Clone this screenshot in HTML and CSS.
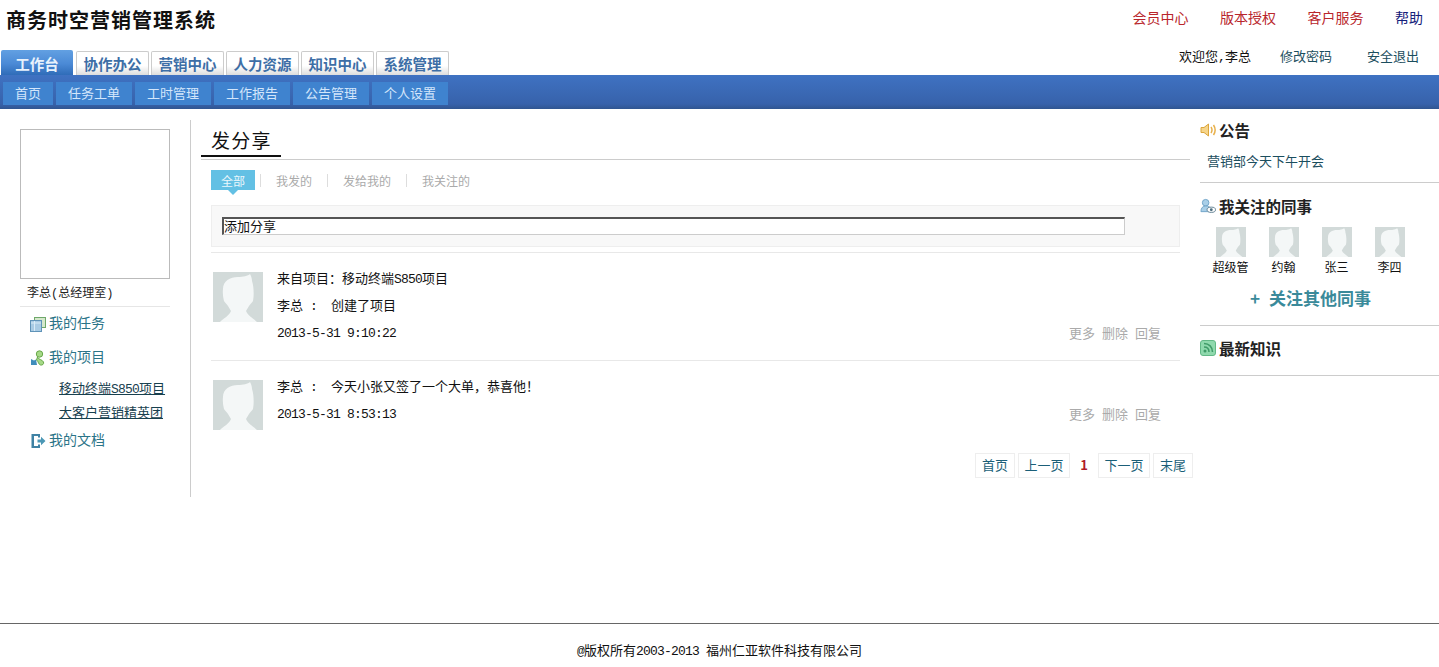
FILE: index.html
```html
<!DOCTYPE html>
<html lang="zh-CN">
<head>
<meta charset="utf-8">
<title>商务时空营销管理系统</title>
<link rel="stylesheet" href="styles.css">
</head>
<body>
<svg class="defs" width="0" height="0" aria-hidden="true">
  <symbol id="avatar" viewBox="0 0 50 50">
    <rect width="50" height="50" fill="#d2dad9"/>
    <path d="M10 17C10 9 17 5 25 5C30 5 35 4 37 2C38 4 39 6 39 9C41 15 41 24 40 29C39 31 37 32 36 34C35 36 34 37 33 39C35 44 40 46 44 50H7C11 46 16 44 18 39C17 37 16 36 15 34C14 32 12 31 11 29C10 25 9.500 21 10 17Z" fill="#f4f7f7"/>
  </symbol>
</svg>
<header class="header">
  <div class="brand">
    <h1 class="title">商务时空营销管理系统</h1>
    <nav class="tabs">
      <a class="tab tab-active">工作台</a>
      <a class="tab">协作办公</a>
      <a class="tab">营销中心</a>
      <a class="tab">人力资源</a>
      <a class="tab">知识中心</a>
      <a class="tab">系统管理</a>
    </nav>
  </div>
  <div class="account">
    <div class="links">
      <a class="link-red">会员中心</a>
      <a class="link-red">版本授权</a>
      <a class="link-red">客户服务</a>
      <a class="link-navy">帮助</a>
    </div>
    <div class="user">
      <span class="welcome">欢迎您<span class="num">,</span>李总</span>
      <a class="user-link">修改密码</a>
      <a class="user-link user-exit">安全退出</a>
    </div>
  </div>
</header>
<nav class="subnav">
  <a class="subnav-item subnav-first">首页</a>
  <a class="subnav-item">任务工单</a>
  <a class="subnav-item">工时管理</a>
  <a class="subnav-item">工作报告</a>
  <a class="subnav-item">公告管理</a>
  <a class="subnav-item">个人设置</a>
</nav>
<main class="main">
  <aside class="left">
    <div class="photo"></div>
    <div class="person">李总(总经理室)</div>
    <ul class="menu">
      <li class="menu-row">
        <svg class="icon" viewBox="0 0 16 16"><rect x="4.500" y="1.500" width="11" height="10" fill="#d5e8cc" stroke="#6fa86a"/><rect x=".5" y="4.500" width="11" height="11" fill="#a9cbe4" stroke="#5f93b8"/><path d="M1 7h10M4.500 5v10" stroke="#d8ebf7"/></svg>
        我的任务
      </li>
      <li class="menu-row">
        <svg class="icon" viewBox="0 0 16 16"><circle cx="9.500" cy="4" r="3.200" fill="#a6d987" stroke="#68a84a"/><path d="M7.500 7c.5 2.500 5 2.500 6 5 .8 2-1.200 3.500-3 3-2-.5-2-3.500-4-5Z" fill="#a6d987" stroke="#68a84a"/><path d="M1 9l3 1.500L6 9.500l1 5.500H1Z" fill="#3f8dbb"/></svg>
        我的项目
      </li>
      <li class="menu-sub"><a>移动终端<span class="num">S850</span>项目</a></li>
      <li class="menu-sub"><a>大客户营销精英团</a></li>
      <li class="menu-row">
        <svg class="icon" viewBox="0 0 16 16"><path d="M1.500 1H10v3.500H8V3H4v10h4v-1.500h2V15H1.500Z" fill="#3f82a4"/><path d="M7.500 6.500H11V3.800L15.500 8 11 12.200V9.500H7.500Z" fill="#4b97b5"/></svg>
        我的文档
      </li>
    </ul>
  </aside>
  <section class="center">
    <div class="page-head"><h2 class="page-title">发分享</h2></div>
    <div class="filters">
      <a class="filter-active">全部</a>
      <a class="filter filter-first">我发的</a>
      <a class="filter">发给我的</a>
      <a class="filter">我关注的</a>
    </div>
    <div class="composer"><input class="composer-input" type="text" value="添加分享"></div>
    <div class="feed">
      <article class="post post-first">
        <svg class="post-avatar"><use href="#avatar"/></svg>
        <div class="post-body">
          <p class="post-row">来自项目：移动终端<span class="num">S850</span>项目</p>
          <p class="post-row">李总<span class="num sep"> :  </span>创建了项目</p>
          <div class="post-row post-foot">
            <span class="num post-time">2013-5-31 9:10:22</span>
            <div class="actions"><a>更多</a><a>删除</a><a>回复</a></div>
          </div>
        </div>
      </article>
      <article class="post">
        <svg class="post-avatar"><use href="#avatar"/></svg>
        <div class="post-body">
          <p class="post-row">李总<span class="num sep"> :  </span>今天小张又签了一个大单，恭喜他！</p>
          <div class="post-row post-foot">
            <span class="num post-time">2013-5-31 8:53:13</span>
            <div class="actions"><a>更多</a><a>删除</a><a>回复</a></div>
          </div>
        </div>
      </article>
    </div>
    <div class="pager">
      <a class="page page-2">首页</a>
      <a class="page page-3">上一页</a>
      <span class="page-current">1</span>
      <a class="page page-3">下一页</a>
      <a class="page page-2">末尾</a>
    </div>
  </section>
  <aside class="right">
    <section class="panel panel-notice">
      <h3 class="panel-title">
        <svg class="icon" viewBox="0 0 16 16"><path d="M1 5.500h3L8.500 2v12L4 10.500H1Z" fill="#f6d58a" stroke="#dca63c"/><path d="M11 5c1.200 1.800 1.200 4.200 0 6M13.500 3c2 3 2 7 0 10" fill="none" stroke="#e8b14c" stroke-width="1.500"/></svg>
        公告
      </h3>
      <a class="notice">营销部今天下午开会</a>
    </section>
    <section class="panel panel-follow">
      <h3 class="panel-title">
        <svg class="icon" viewBox="0 0 17 16"><circle cx="6" cy="4.500" r="3.500" fill="#a9cfe8" stroke="#6fa3c8"/><path d="M1 14c0-4 2-6 5-6s4 1 5 2v4Z" fill="#a9cfe8" stroke="#6fa3c8"/><ellipse cx="12" cy="12" rx="4.500" ry="2.800" fill="#fff" stroke="#5f7f90"/><circle cx="12" cy="12" r="1.500" fill="#4f6f80"/></svg>
        我关注的同事
      </h3>
      <div class="people">
        <div class="colleague"><svg class="colleague-avatar"><use href="#avatar"/></svg><span>超级管</span></div>
        <div class="colleague"><svg class="colleague-avatar"><use href="#avatar"/></svg><span>约翰</span></div>
        <div class="colleague"><svg class="colleague-avatar"><use href="#avatar"/></svg><span>张三</span></div>
        <div class="colleague"><svg class="colleague-avatar"><use href="#avatar"/></svg><span>李四</span></div>
      </div>
      <a class="follow-more"><span class="plus">+</span>关注其他同事</a>
    </section>
    <section class="panel panel-news">
      <h3 class="panel-title">
        <svg class="icon" viewBox="0 0 16 16"><rect x=".5" y=".5" width="15" height="15" rx="2.500" fill="#8fd9ad" stroke="#62b886"/><circle cx="5" cy="11" r="1.500" fill="#3f9a68"/><path d="M4 7c3 0 5 2 5 5M4 3.500c5 0 8.500 3.500 8.500 8.500" fill="none" stroke="#3f9a68" stroke-width="1.500"/></svg>
        最新知识
      </h3>
    </section>
  </aside>
</main>
<footer class="footer"><span class="num">@</span>版权所有<span class="num">2003-2013 </span>福州仁亚软件科技有限公司</footer>
</body>
</html>
```
FILE: styles.css
```css
* { box-sizing: border-box; }
html, body { margin: 0; padding: 0; }
body {
  min-height: 667px;
  display: flex;
  flex-direction: column;
  background: #fff;
  color: #111;
  font: 13px/1.4 "Noto Sans CJK SC", "Liberation Sans", sans-serif;
}
a { color: inherit; text-decoration: none; }
h1, h2, h3, p, ul { margin: 0; padding: 0; }
ul { list-style: none; }
.defs { position: absolute; }
.num { font-family: "Liberation Mono", "Noto Sans CJK SC", monospace; font-size: 13px; letter-spacing: -0.8px; }
.sep { white-space: pre; }

.header { height: 75px; display: flex; justify-content: space-between; }
.title { height: 50px; padding: 0 0 8px 6px; font-size: 20px; line-height: 40px; font-weight: 700; letter-spacing: 1px; color: #111; }
.tabs { display: flex; align-items: flex-end; height: 25px; padding-left: 1px; gap: 2px; }
.tab {
  width: 73px; height: 24px;
  border: 1px solid #ccc; border-bottom: 0; border-radius: 2px 2px 0 0;
  background: linear-gradient(#fff 60%, #ddd);
  color: #3d6ea6; font-size: 14.5px; font-weight: 700; line-height: 23px; text-align: center;
}
.tab-active {
  width: 72px; height: 25px; margin-right: 1px; border: 0;
  background: linear-gradient(#62a0e2, #4b8ad6 55%, #2f6cb8);
  color: #e8f2fc; line-height: 27px;
}
.account { display: flex; flex-direction: column; }
.links { height: 36px; display: flex; justify-content: flex-end; align-items: center; gap: 31.500px; padding-right: 16px; font-size: 14px; }
.link-red { color: #b9262c; }
.link-navy { color: #14207a; }
.user { height: 39px; display: flex; align-items: flex-start; justify-content: flex-end; padding: 10px 20px 0 0; line-height: 20px; }
.welcome { color: #111; }
.user-link { color: #1b4e5e; margin-left: 29px; }
.user-exit { margin-left: 35px; }

.subnav {
  height: 34px; padding: 7px 0 4px 3px; display: flex; gap: 3px;
  background: linear-gradient(#3f72c2, #3762ab 85%, #305590);
}
.subnav-item { width: 76px; height: 23px; background: #3f83cf; color: #d3e6fb; line-height: 21px; text-align: center; }
.subnav-first { width: 50px; }

.main { display: flex; padding-top: 11px; }
.left { width: 191px; height: 377px; border-right: 1px solid #ccc; }
.photo { width: 150px; height: 150px; margin: 9px 0 0 20px; border: 1px solid #bbb; }
.person {
  width: 150px; height: 28px; margin-left: 20px; padding: 3px 0 0 7px;
  border-bottom: 1px solid #e6e6e6;
  font-family: "Liberation Mono", "Noto Sans CJK SC", monospace; font-size: 12px; line-height: 24px; color: #222;
}
.menu { margin-left: 30px; }
.menu-row { height: 34px; padding-bottom: 3px; display: flex; align-items: center; gap: 3px; font-size: 14px; color: #2a7488; }
.menu-row .icon { margin-top: 3px; }
.menu-sub { height: 24px; margin-left: 29px; line-height: 23px; color: #17404e; text-decoration: underline; }
.menu-sub:nth-child(3) { margin-top: 1px; }
.icon { width: 16px; height: 16px; flex: none; }

.center { width: 999px; padding-left: 10px; }
.page-head { height: 40px; border-bottom: 1px solid #ccc; }
.page-title {
  width: 80px; height: 37px; padding: 5px 0 0 10px;
  border-bottom: 2px solid #111;
  font-size: 19px; line-height: 29px; font-weight: 400; letter-spacing: 1.300px; color: #111;
}
.filters { display: flex; align-items: center; height: 20px; margin: 10px 0 0 10px; font-size: 12px; color: #aaa; }
.filter-active { position: relative; width: 44px; height: 20px; background: #63c0e4; color: #eaf7fc; line-height: 21px; text-align: center; }
.filter-active::after {
  content: ""; position: absolute; left: 17px; top: 20px;
  border: 5px solid transparent; border-top-color: #63c0e4; border-bottom: 0;
}
.filter { margin-left: 15px; padding-left: 15px; border-left: 1px solid #ddd; height: 13px; line-height: 13px; }
.filter-first { margin-left: 5px; }
.composer { width: 969px; height: 42px; margin: 15px 0 0 10px; padding: 11px 0 0 10px; border: 1px solid #eee; background: #f8f8f8; }
.composer-input {
  display: block; width: 903px; height: 18px; padding: 0 0 2px;
  border: 1px solid #ccc; border-top: 2px solid #555; border-left: 2px solid #555;
  background: #fff; color: #111; font: 13px/13px "Noto Sans CJK SC", sans-serif; outline: 0;
}
.feed { width: 969px; margin: 5px 0 0 10px; }
.post { display: flex; padding-top: 13px; border-top: 1px solid #e8e8e8; }
.post-first { padding-bottom: 13px; }
.post-avatar { width: 50px; height: 50px; margin: 6px 14px 0 2px; flex: none; }
.post-body { flex: 1; }
.post-row { height: 27px; line-height: 23px; color: #111; }
.post-foot { display: flex; justify-content: space-between; padding-right: 19px; }
.post-time { line-height: 27px; }
.actions { display: flex; gap: 7px; color: #aaa; line-height: 25px; }

.pager { display: flex; justify-content: flex-end; margin: 23px -3px 0 0; gap: 3px; color: #1b5f78; }
.page { height: 25px; border: 1px solid #eee; line-height: 22px; text-align: center; }
.page-2 { width: 40px; }
.page-3 { width: 52px; }
.page-current { width: 22px; color: #b01c2a; font-weight: 700; line-height: 24px; text-align: center; }

.right { width: 239px; margin-left: 10px; }
.panel { border-bottom: 1px solid #ccc; }
.panel-notice { padding-bottom: 10px; }
.panel-follow { padding: 13px 0 14px; }
.panel-news { padding: 12px 0 15px; }
.panel-title { height: 22px; padding-bottom: 2px; display: flex; align-items: center; gap: 3px; font-size: 15.500px; line-height: 20px; font-weight: 700; color: #222; }
.notice { display: block; height: 22px; margin: 8px 0 0 7px; line-height: 21px; color: #1b4e5e; }
.people { display: flex; margin: 9px 0 0 4px; }
.colleague { width: 53px; display: flex; flex-direction: column; align-items: center; font-size: 12px; line-height: 20px; color: #111; }
.colleague-avatar { width: 30px; height: 30px; }
.follow-more { display: block; height: 24px; margin-top: 10px; padding-left: 50px; font-size: 17px; line-height: 22px; font-weight: 700; color: #3a8a9a; }
.plus { margin-right: 9px; }

.footer { height: 44px; margin-top: auto; border-top: 1px solid #666; padding-top: 16px; line-height: 20px; text-align: center; color: #111; }
```
